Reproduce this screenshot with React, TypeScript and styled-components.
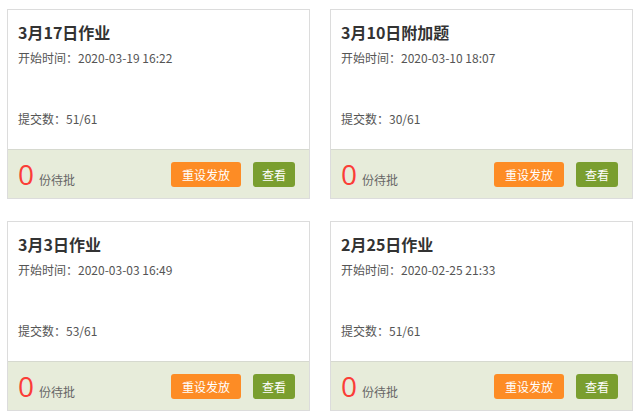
import styled, { createGlobalStyle } from "styled-components";

const GlobalStyle = createGlobalStyle`
  html, body {
    margin: 0;
    padding: 0;
    background: #ffffff;
  }
  body {
    font-family: "Microsoft YaHei", "Noto Sans CJK SC", "Noto Sans", sans-serif;
    color: #333;
  }
`;

type Task = {
  title: string;
  start: string;
  submitted: number;
  total: number;
  pending: number;
};

const tasks: Task[] = [
  { title: "3月17日作业", start: "2020-03-19 16:22", submitted: 51, total: 61, pending: 0 },
  { title: "3月10日附加题", start: "2020-03-10 18:07", submitted: 30, total: 61, pending: 0 },
  { title: "3月3日作业", start: "2020-03-03 16:49", submitted: 53, total: 61, pending: 0 },
  { title: "2月25日作业", start: "2020-02-25 21:33", submitted: 51, total: 61, pending: 0 },
];

const Page = styled.div`
  padding: 9px 0 0 7px;
  display: grid;
  grid-template-columns: 303px 303px;
  column-gap: 20px;
  row-gap: 22px;
`;

const Card = styled.div`
  display: flex;
  flex-direction: column;
  border: 1px solid #dcdcdc;
  background: #fff;
  height: 188px;
`;

const Body = styled.div`
  flex: 1;
  display: flex;
  flex-direction: column;
  padding: 10px 10px 20px 10px;
`;

const Title = styled.div`
  font-size: 16px;
  font-weight: 700;
  line-height: 24px;
  color: #333;
`;

const Line = styled.div<{ $bottom?: boolean }>`
  font-size: 12px;
  line-height: 20px;
  color: #555;
  margin-top: ${(p) => (p.$bottom ? "auto" : "4px")};
`;

const Footer = styled.div`
  height: 48px;
  border-top: 1px solid #d6d9cf;
  background: #e7ecda;
  display: flex;
  align-items: center;
  padding: 0 14px 0 10px;
  gap: 12px;
`;

const Pending = styled.div`
  flex: 1;
  display: flex;
  align-items: baseline;
  gap: 5px;
`;

const Count = styled.span`
  font-size: 28px;
  line-height: 30px;
  color: #fb3d37;
  font-family: "Open Sans", "Noto Sans", sans-serif;
`;

const Unit = styled.span`
  font-size: 12px;
  color: #666;
`;

const Button = styled.button<{ $tone: "orange" | "green" }>`
  border: none;
  border-radius: 3px;
  height: 25px;
  padding: 0 ${(p) => (p.$tone === "orange" ? "11px" : "9px")};
  font-family: inherit;
  font-size: 12px;
  color: #fff;
  cursor: pointer;
  background: ${(p) => (p.$tone === "orange" ? "#fd8c25" : "#7a9e2f")};
`;

function TaskCard({ task }: { task: Task }) {
  return (
    <Card>
      <Body>
        <Title>{task.title}</Title>
        <Line>开始时间：{task.start}</Line>
        <Line $bottom>
          提交数：{task.submitted}/{task.total}
        </Line>
      </Body>
      <Footer>
        <Pending>
          <Count>{task.pending}</Count>
          <Unit>份待批</Unit>
        </Pending>
        <Button $tone="orange">重设发放</Button>
        <Button $tone="green">查看</Button>
      </Footer>
    </Card>
  );
}

export default function App() {
  return (
    <>
      <GlobalStyle />
      <Page>
        {tasks.map((t) => (
          <TaskCard key={t.title} task={t} />
        ))}
      </Page>
    </>
  );
}
